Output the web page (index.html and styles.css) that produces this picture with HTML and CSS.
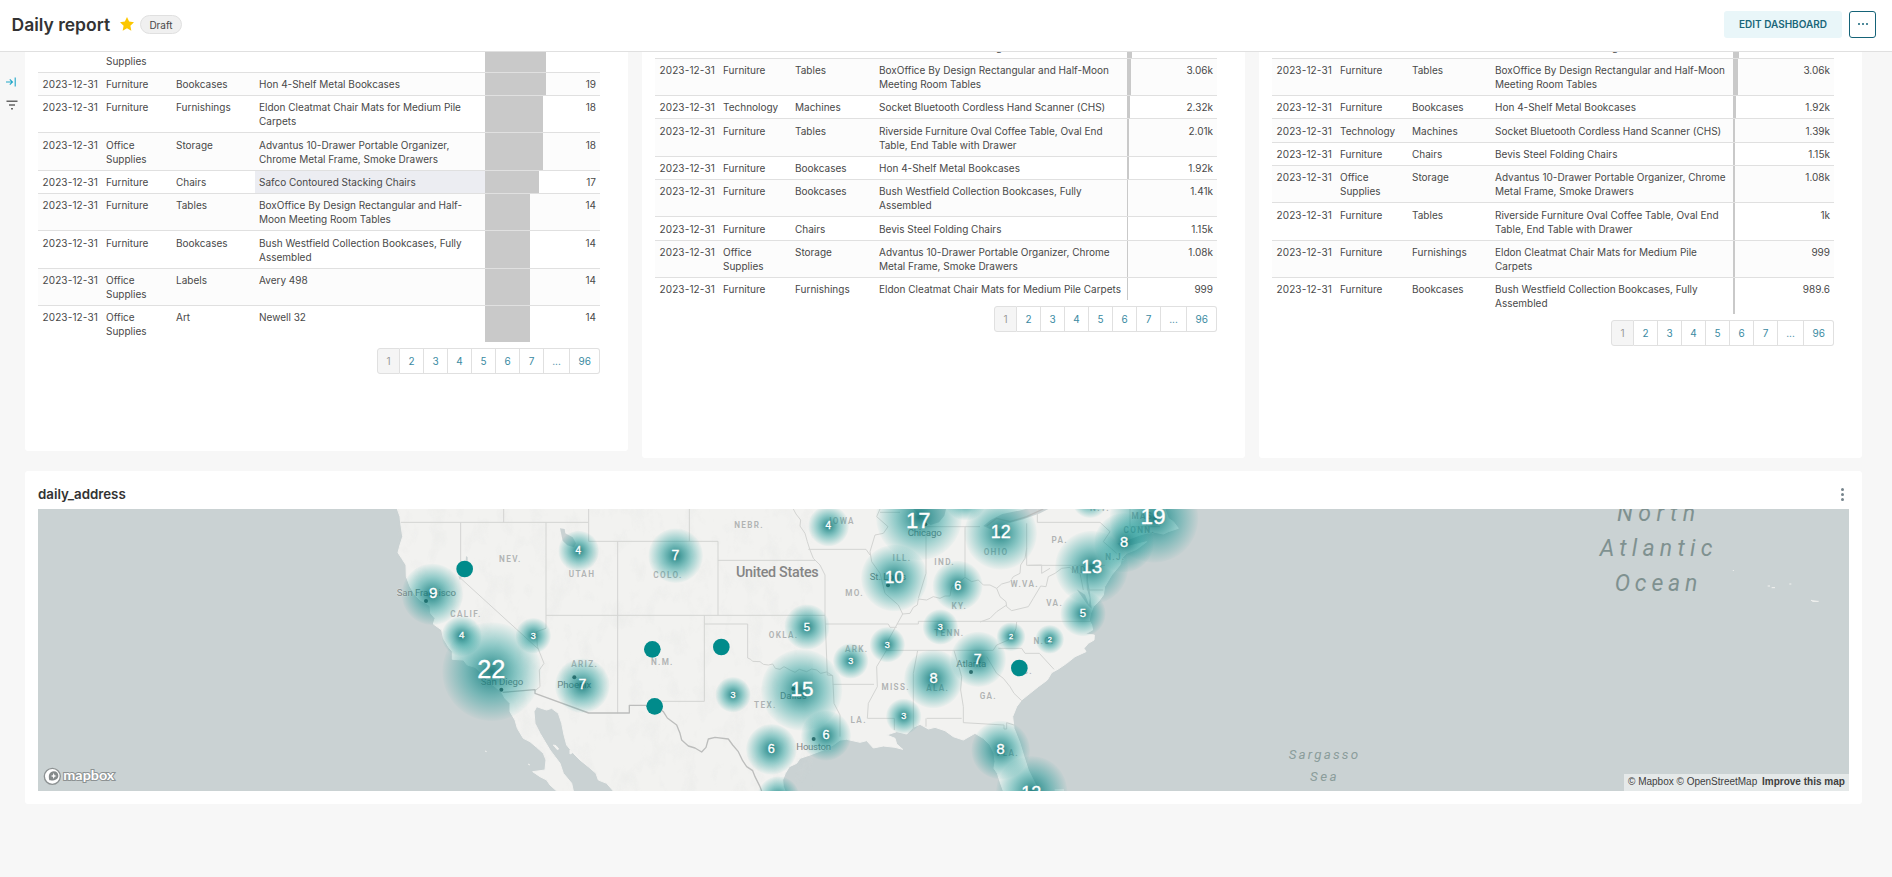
FILE: index.html
```html
<!DOCTYPE html>
<html lang="en">
<head>
<meta charset="utf-8">
<title>Daily report</title>
<link rel="stylesheet" href="styles.css">
</head>
<body>
<header class="header">
  <h1 class="title">Daily report</h1>
  <svg class="star" viewBox="0 0 24 24"><path d="M12 1.500l3.200 6.900 7.300.9-5.400 5.200 1.400 7.500L12 18.400 5.500 22l1.400-7.500L1.500 9.300l7.300-.9z"/></svg>
  <span class="tag">Draft</span>
  <button class="btn edit">EDIT DASHBOARD</button>
  <button class="btn more"><i></i><i></i><i></i></button>
</header>
<div class="body">
  <aside class="rail">
    <svg class="expand" viewBox="0 0 10 10"><path d="M0 5h6.300M3.800 2.300L6.500 5 3.800 7.700M9.200.5v9"/></svg>
    <svg class="filter" viewBox="0 0 12 10"><path d="M.5 1.200h11M3 5h6M5 8.800h2"/></svg>
  </aside>
  <main class="main">
    <div class="charts">
      <section class="card short">
        <div class="table t1">
          <div class="row cut"><span></span><span>Supplies</span><span></span><span></span><span class="val" style="--w:61px"></span></div>
          <div class="row"><span>2023-12-31</span><span>Furniture</span><span>Bookcases</span><span>Hon 4-Shelf Metal Bookcases</span><span class="val" style="--w:61px">19</span></div>
          <div class="row"><span>2023-12-31</span><span>Furniture</span><span>Furnishings</span><span>Eldon Cleatmat Chair Mats for Medium Pile<br>Carpets</span><span class="val" style="--w:58px">18</span></div>
          <div class="row tall"><span>2023-12-31</span><span>Office<br>Supplies</span><span>Storage</span><span>Advantus 10-Drawer Portable Organizer,<br>Chrome Metal Frame, Smoke Drawers</span><span class="val" style="--w:58px">18</span></div>
          <div class="row"><span>2023-12-31</span><span>Furniture</span><span>Chairs</span><span class="hover">Safco Contoured Stacking Chairs</span><span class="val" style="--w:54px">17</span></div>
          <div class="row"><span>2023-12-31</span><span>Furniture</span><span>Tables</span><span>BoxOffice By Design Rectangular and Half-<br>Moon Meeting Room Tables</span><span class="val" style="--w:45px">14</span></div>
          <div class="row tall"><span>2023-12-31</span><span>Furniture</span><span>Bookcases</span><span>Bush Westfield Collection Bookcases, Fully<br>Assembled</span><span class="val" style="--w:45px">14</span></div>
          <div class="row"><span>2023-12-31</span><span>Office<br>Supplies</span><span>Labels</span><span>Avery 498</span><span class="val" style="--w:45px">14</span></div>
          <div class="row"><span>2023-12-31</span><span>Office<br>Supplies</span><span>Art</span><span>Newell 32</span><span class="val" style="--w:45px">14</span></div>
        </div>
        <nav class="pages p1"><b>1</b><a>2</a><a>3</a><a>4</a><a>5</a><a>6</a><a>7</a><a class="gap">...</a><a class="last">96</a></nav>
      </section>
      <section class="card">
        <div class="table t2">
          <div class="row cut"><span></span><span></span><span></span><span class="tail">g</span><span class="val" style="--w:5px"></span></div>
          <div class="row"><span>2023-12-31</span><span>Furniture</span><span>Tables</span><span>BoxOffice By Design Rectangular and Half-Moon<br>Meeting Room Tables</span><span class="val" style="--w:4px">3.06k</span></div>
          <div class="row"><span>2023-12-31</span><span>Technology</span><span>Machines</span><span>Socket Bluetooth Cordless Hand Scanner (CHS)</span><span class="val" style="--w:3px">2.32k</span></div>
          <div class="row tall"><span>2023-12-31</span><span>Furniture</span><span>Tables</span><span>Riverside Furniture Oval Coffee Table, Oval End<br>Table, End Table with Drawer</span><span class="val" style="--w:2px">2.01k</span></div>
          <div class="row"><span>2023-12-31</span><span>Furniture</span><span>Bookcases</span><span>Hon 4-Shelf Metal Bookcases</span><span class="val" style="--w:2px">1.92k</span></div>
          <div class="row"><span>2023-12-31</span><span>Furniture</span><span>Bookcases</span><span>Bush Westfield Collection Bookcases, Fully<br>Assembled</span><span class="val" style="--w:1px">1.41k</span></div>
          <div class="row tall"><span>2023-12-31</span><span>Furniture</span><span>Chairs</span><span>Bevis Steel Folding Chairs</span><span class="val" style="--w:1px">1.15k</span></div>
          <div class="row"><span>2023-12-31</span><span>Office<br>Supplies</span><span>Storage</span><span>Advantus 10-Drawer Portable Organizer, Chrome<br>Metal Frame, Smoke Drawers</span><span class="val" style="--w:1px">1.08k</span></div>
          <div class="row"><span>2023-12-31</span><span>Furniture</span><span>Furnishings</span><span>Eldon Cleatmat Chair Mats for Medium Pile Carpets</span><span class="val" style="--w:1px">999</span></div>
        </div>
        <nav class="pages p2"><b>1</b><a>2</a><a>3</a><a>4</a><a>5</a><a>6</a><a>7</a><a class="gap">...</a><a class="last">96</a></nav>
      </section>
      <section class="card">
        <div class="table t3">
          <div class="row cut"><span></span><span></span><span></span><span class="tail">g</span><span class="val" style="--w:6px"></span></div>
          <div class="row"><span>2023-12-31</span><span>Furniture</span><span>Tables</span><span>BoxOffice By Design Rectangular and Half-Moon<br>Meeting Room Tables</span><span class="val" style="--w:5px">3.06k</span></div>
          <div class="row"><span>2023-12-31</span><span>Furniture</span><span>Bookcases</span><span>Hon 4-Shelf Metal Bookcases</span><span class="val" style="--w:3px">1.92k</span></div>
          <div class="row tall"><span>2023-12-31</span><span>Technology</span><span>Machines</span><span>Socket Bluetooth Cordless Hand Scanner (CHS)</span><span class="val" style="--w:2px">1.39k</span></div>
          <div class="row"><span>2023-12-31</span><span>Furniture</span><span>Chairs</span><span>Bevis Steel Folding Chairs</span><span class="val" style="--w:2px">1.15k</span></div>
          <div class="row"><span>2023-12-31</span><span>Office<br>Supplies</span><span>Storage</span><span>Advantus 10-Drawer Portable Organizer, Chrome<br>Metal Frame, Smoke Drawers</span><span class="val" style="--w:2px">1.08k</span></div>
          <div class="row tall"><span>2023-12-31</span><span>Furniture</span><span>Tables</span><span>Riverside Furniture Oval Coffee Table, Oval End<br>Table, End Table with Drawer</span><span class="val" style="--w:2px">1k</span></div>
          <div class="row"><span>2023-12-31</span><span>Furniture</span><span>Furnishings</span><span>Eldon Cleatmat Chair Mats for Medium Pile<br>Carpets</span><span class="val" style="--w:2px">999</span></div>
          <div class="row"><span>2023-12-31</span><span>Furniture</span><span>Bookcases</span><span>Bush Westfield Collection Bookcases, Fully<br>Assembled</span><span class="val" style="--w:2px">989.6</span></div>
        </div>
        <nav class="pages p1"><b>1</b><a>2</a><a>3</a><a>4</a><a>5</a><a>6</a><a>7</a><a class="gap">...</a><a class="last">96</a></nav>
      </section>
    </div>
    <section class="card mapcard">
      <div class="maphead"><h2>daily_address</h2><span class="kebab"><i></i><i></i><i></i></span></div>
      <div class="map">
        <svg viewBox="-1026 57 5433 846" preserveAspectRatio="none">
          <defs>
            <radialGradient id="g"><stop offset="0" stop-color="#00696b" stop-opacity=".84"/><stop offset=".2" stop-color="#007a7a" stop-opacity=".68"/><stop offset=".55" stop-color="#008f8d" stop-opacity=".4"/><stop offset="1" stop-color="#009490" stop-opacity=".02"/></radialGradient>
            <filter id="relief" x="0" y="0" width="100%" height="100%"><feTurbulence type="fractalNoise" baseFrequency=".02 .012" numOctaves="4" seed="4"/><feColorMatrix values="0 0 0 0 .72  0 0 0 0 .74  0 0 0 0 .73  2.200 0 0 0 -1.100"/></filter>
            <clipPath id="landclip"><path d="M52 57H1300V903H700L680 880 655 870 648 850 625 830 560 765 545 700 515 655 462 650 480 730 540 820 580 903H530L498 810 430 745 375 625 300 545 217 508 160 400 80 260 55 188Z"/></clipPath>
          </defs>
          <g class="land">
            <path d="M52 57L60 80 62 100 68 140 60 165 54 188 65 205 78 225 79 260 90 290 105 315 120 330 138 340 150 348 152 370 165 385 160 402 185 420 190 445 205 470 217 485 217 508 250 510 262 525 285 532 300 545 318 570 345 590 365 607 375 625 390 640 390 665 405 690 412 715 430 745 450 755 470 772 490 790 498 810 495 840 458 845 480 860 500 870 510 885 530 903H580L575 880 550 850 540 820 525 800 510 780 495 755 480 730 465 700 462 665 470 650 490 657 500 660 515 655 535 670 545 700 552 735 560 765 580 790 600 810 625 830 648 850 655 870 680 880 700 903H1215L1210 890 1208 870 1216 850 1228 830 1250 820 1260 805 1290 795 1330 780 1360 765 1380 750 1400 748 1440 757 1460 752 1480 774 1510 768 1545 772 1568 778 1550 762 1545 745 1520 735 1550 725 1580 732 1600 712 1620 703 1645 717 1665 712 1695 722 1720 740 1750 750 1785 730 1810 745 1830 765 1842 790 1845 815 1842 835 1852 850 1860 875 1870 903H1975L1965 880 1945 840 1932 800 1920 760 1902 715 1898 680 1910 650 1925 630 1950 610 1975 590 2002 570 2015 548 2035 537 2060 520 2085 500 2118 485 2112 475 2125 460 2142 450 2143 435 2115 432 2138 420 2135 405 2128 390 2132 370 2140 350 2155 335 2170 315 2174 290 2195 255 2220 225 2225 205 2240 190 2270 178 2300 155 2260 165 2225 175 2210 160 2240 150 2280 135 2315 125 2350 132 2365 125 2395 115 2380 95 2365 85 2355 57Z"/>
            <path d="M520 765l8 2 8 10-4 2zM570 780l8 8-8 4zM315 783l5 2M444 822l6 3M2024 900h28M4060 240v3M4163 288h7M4175 293h10M4228 282h6M4293 330l5 4h18"/>
          </g>
          <g clip-path="url(#landclip)"><rect class="relief" x="50" y="57" width="1250" height="846" filter="url(#relief)"/></g>
          <g class="water">
            <path d="M540 115l14 2 2 13 22 12 10 18-6 12-20-6-14-14zM1600 57h98l-5 20-16 20-25 8-22-14zM1810 108l22-18 35-18 50-10 20-5h68l-25 13-50 18-45 12-55 17zM2090 298l25 16 12 30 2-20-8-28-2-46 10 50 6 56-14-14z"/>
            <path d="M258 198l5 4v12h-6zM235 258l9 4-4 9z"/>
          </g>
          <g class="states">
            <path d="M62 97H626V57M371 57V97M242 97V265L478 480M498 97V415L470 425 472 470 492 520 478 540 480 590 465 602M498 376H1335M626 97V154H1014V376M713 154V670M928 57V154M1014 211H1305M973 376V634H840M973 402H1103V504L1112 508 1118 514 1140 515 1150 523 1165 525 1178 522 1186 535 1200 538 1212 530 1230 540 1245 547 1258 538 1280 545 1295 537 1310 540 1322 550 1340 546 1358 557M1240 57L1248 72 1262 90 1260 108 1275 130 1282 155 1290 180 1300 205 1320 225 1335 255V376L1342 555 1358 557 1362 640 1380 675V740M1285 178H1458L1470 195M1500 57L1490 80 1524 110 1510 130 1485 135 1470 185 1475 215 1500 250 1515 310 1555 345 1568 372 1550 405 1525 450 1520 480 1490 530 1492 590 1465 640 1462 685H1543V720M1500 67H1560M1335 402H1525L1530 412H1550M1358 583H1482M1638 135V250L1615 325M1638 110H1800M1755 110V260M1568 372L1590 370 1600 352 1612 345 1615 327 1640 330 1660 320 1680 325 1695 318 1710 318 1715 290 1735 278 1755 262 1775 275 1795 270 1810 285 1830 285 1850 295M1550 402H1615V394H2135M1520 481H1840M1613 481L1600 550V720M1722 481L1745 560 1742 600 1750 650 1750 698 1872 705V717H1880V698L1902 705M1640 685H1745M1638 710V685M1940 100V226H2175M1972 57V97H2160L2190 125 2170 155 2210 190M1940 175L1935 205 1922 225 1920 250 1900 260 1890 275 1865 282 1850 295 1860 320 1878 335 1880 350 1895 362 1945 350 1960 325 1975 300 1982 288 1998 290 2005 260 2025 250 2045 235 2070 232 2085 250 2100 250 2110 300M1800 396L1830 385 1850 365 1880 345M1840 480L1850 465 1885 450 1900 435 1908 415 1910 396M1855 475H1925L1935 490H1978L2022 538M1820 500L1850 550 1870 565 1890 590 1902 610 1925 632M1945 226L1985 225 1985 250 2010 235M2250 57V110H2340M2122 226V300H2170M2300 57V120"/>
          </g>
          <path class="nation" d="M368 607L465 599V610L626 669H748V646H820L850 665 862 684 890 705 900 730 905 750 925 768 945 774 965 786 978 772 985 747 1005 742 1045 747 1058 765 1075 785 1088 812 1100 830 1118 842 1125 860 1140 890 1145 903M1820 108L1850 85 1890 95 1940 80 1990 57"/>
          <g class="labels st">
            <text x="391" y="216">NEV.</text><text x="606" y="261">UTAH</text><text x="864" y="265">COLO.</text><text x="258" y="381">CALIF.</text><text x="614" y="531">ARIZ.</text><text x="847" y="525">N.M.</text><text x="1107" y="114">NEBR.</text><text x="1211" y="443">OKLA.</text><text x="1156" y="655">TEX.</text><text x="1386" y="101">IOWA</text><text x="1424" y="319">MO.</text><text x="1566" y="212">ILL.</text><text x="1694" y="224">IND.</text><text x="1738" y="356">KY.</text><text x="1708" y="438">TENN.</text><text x="1430" y="486">ARK.</text><text x="1547" y="601">MISS.</text><text x="1673" y="603">ALA.</text><text x="1436" y="699">LA.</text><text x="1825" y="628">GA.</text><text x="1848" y="196">OHIO</text><text x="2039" y="159">PA.</text><text x="1934" y="290">W.VA.</text><text x="2024" y="349">VA.</text><text x="1992" y="461">N.C.</text><text x="1928" y="553">S.C.</text><text x="2206" y="211">N.J.</text><text x="2102" y="250">MD.</text><text x="2278" y="128">CONN.</text><text x="2302" y="88">MASS.</text><text x="1884" y="798">FLA.</text><text x="2160" y="63">N.Y.</text>
          </g>
          <text class="us" x="1192" y="260" textLength="248">United States</text>
          <g class="labels city">
            <text x="139" y="318" textLength="178">San Francisco</text><text x="366" y="584" textLength="128">San Diego</text><text x="583" y="593" textLength="102">Phoenix</text><text x="1634" y="137" textLength="102">Chicago</text><text x="1524" y="271" textLength="110">St. Louis</text><text x="1240" y="628" textLength="80">Dallas</text><text x="1301" y="780" textLength="104">Houston</text><text x="1774" y="530" textLength="90">Atlanta</text>
          </g>
          <g class="pins"><circle cx="138" cy="333" r="6"/><circle cx="364" cy="599" r="6"/><circle cx="583" cy="562" r="6"/><circle cx="1524" cy="286" r="6"/><circle cx="1240" cy="596" r="6"/><circle cx="1301" cy="747" r="6"/><circle cx="1773" cy="546" r="6"/><circle cx="1636" cy="103" r="6"/></g>
          <g class="sea"><text x="3828" y="93" textLength="234">North</text><text x="3828" y="199" textLength="338">Atlantic</text><text x="3828" y="303" textLength="248">Ocean</text></g>
          <g class="sea small"><text x="2830" y="808" textLength="208">Sargasso</text><text x="2830" y="872" textLength="80">Sea</text></g>
          <g class="heat">
            <circle cx="335" cy="545" r="148"/><circle cx="157" cy="313" r="92"/><circle cx="245" cy="438" r="60"/><circle cx="460" cy="437" r="53"/><circle cx="607" cy="587" r="82"/><circle cx="596" cy="183" r="61"/><circle cx="887" cy="197" r="82"/><circle cx="1059" cy="614" r="53"/><circle cx="1174" cy="778" r="76"/><circle cx="1346" cy="108" r="61"/><circle cx="1617" cy="82" r="129"/><circle cx="1543" cy="264" r="100"/><circle cx="1733" cy="287" r="75"/><circle cx="1281" cy="411" r="68"/><circle cx="1681" cy="411" r="53"/><circle cx="1412" cy="513" r="53"/><circle cx="1522" cy="464" r="53"/><circle cx="1265" cy="600" r="122"/><circle cx="1660" cy="567" r="88"/><circle cx="1795" cy="508" r="83"/><circle cx="1571" cy="679" r="53"/><circle cx="1338" cy="737" r="75"/><circle cx="1195" cy="922" r="63"/><circle cx="1757" cy="28" r="63"/><circle cx="1862" cy="130" r="109"/><circle cx="2130" cy="30" r="54"/><circle cx="2322" cy="85" r="133"/><circle cx="2232" cy="158" r="89"/><circle cx="2135" cy="232" r="110"/><circle cx="2109" cy="371" r="68"/><circle cx="1893" cy="440" r="43"/><circle cx="2009" cy="448" r="43"/><circle cx="1862" cy="780" r="88"/><circle cx="1955" cy="905" r="107"/>
          </g>
          <g class="dots"><circle cx="254" cy="237" r="25"/><circle cx="817" cy="478" r="25"/><circle cx="1024" cy="471" r="25"/><circle cx="824" cy="649" r="25"/><circle cx="1918" cy="534" r="25"/></g>
          <g class="counts">
            <text x="334" y="565" font-size="76">22</text><text x="160" y="324" font-size="46">9</text><text x="245" y="445" font-size="29">4</text><text x="460" y="446" font-size="27">3</text><text x="607" y="598" font-size="42">7</text><text x="595" y="192" font-size="30">4</text><text x="886" y="209" font-size="42">7</text><text x="1059" y="623" font-size="27">3</text><text x="1174" y="790" font-size="38">6</text><text x="1345" y="116" font-size="30">4</text><text x="1615" y="113" font-size="66">17</text><text x="1543" y="280" font-size="52">10</text><text x="1733" y="299" font-size="38">6</text><text x="1281" y="423" font-size="34">5</text><text x="1681" y="420" font-size="27">3</text><text x="1412" y="522" font-size="27">3</text><text x="1522" y="473" font-size="27">3</text><text x="1266" y="617" font-size="62">15</text><text x="1661" y="579" font-size="44">8</text><text x="1793" y="521" font-size="42">7</text><text x="1571" y="688" font-size="27">3</text><text x="1338" y="748" font-size="38">6</text><text x="1862" y="145" font-size="54">12</text><text x="2319" y="103" font-size="68">19</text><text x="2232" y="171" font-size="44">8</text><text x="2135" y="250" font-size="56">13</text><text x="2109" y="382" font-size="34">5</text><text x="1893" y="447" font-size="22">2</text><text x="2009" y="455" font-size="22">2</text><text x="1862" y="792" font-size="44">8</text><text x="1954" y="926" font-size="54">12</text>
          </g>
          <g class="logo"><circle cx="-983" cy="859" r="24"/><path d="M-992 871c-5-16 2-27 13-27 9 0 14 6 14 13 0 11-12 16-27 14z"/><path class="spark" d="M-979 849l2.500 6.500 6.500 2.500-6.500 2.500-2.500 6.500-2.500-6.500-6.500-2.500 6.500-2.500z"/><text x="-950" y="870" textLength="153" lengthAdjust="spacingAndGlyphs">mapbox</text></g>
        </svg>
        <div class="attrib">© Mapbox © OpenStreetMap <b>Improve this map</b></div>
      </div>
    </section>
  </main>
</div>
</body>
</html>
```
FILE: styles.css
```css
* { box-sizing: border-box; }
body {
  margin: 0;
  height: 877px;
  overflow: hidden;
  background: #f7f7f7;
  font-family: Inter, "Liberation Sans", sans-serif;
  font-size: 10px;
  color: #484848;
}
.header {
  height: 52px;
  display: flex;
  align-items: center;
  padding: 0 16px 3px 11.5px;
  background: #fff;
  border-bottom: 1px solid #e0e0e0;
}
.title { margin: 0; font-size: 17.5px; font-weight: 600; letter-spacing: 0; color: #333; width: 107.5px; white-space: nowrap; }
.star { width: 16px; height: 16px; fill: #fcc700; }
.tag {
  margin-left: 5px;
  width: 42px;
  height: 19px;
  line-height: 18px;
  text-align: center;
  border: 1px solid #e0e0e0;
  border-radius: 10px;
  background: #f0f0f0;
}
.btn { font: 600 10px Inter, sans-serif; height: 27px; border-radius: 3px; border: 0; padding: 0; }
.edit { margin-left: auto; width: 118px; background: #e9f6f9; color: #1a6679; }
.more { margin-left: 7px; width: 27px; background: #fff; border: 1px solid #156378; display: flex; align-items: center; justify-content: center; gap: 2px; }
.more i { width: 2px; height: 2px; border-radius: 1px; background: #156378; }
.body { display: flex; height: 825px; }
.rail { width: 25px; padding: 25px 0 0 6px; }
.rail svg { display: block; fill: none; }
.expand { width: 10px; height: 10px; stroke: #20a7c9; stroke-width: 1.100; }
.filter { width: 12px; height: 10px; margin-top: 13px; stroke: #666; stroke-width: 1.600; }
.main { width: 1837px; }
.charts { display: grid; grid-template-columns: repeat(3, 603px); gap: 14px; height: 406px; align-items: start; }
.card { background: #fff; border-radius: 0 0 3px 3px; height: 406px; padding-left: 13px; }
.short { height: 399px; }
.row { display: grid; border-bottom: 1px solid #e0e0e0; line-height: 14px; white-space: nowrap; }
.row span { padding: 4px; }
.row span:first-child { letter-spacing: .12px; padding-left: 4.5px; }
.row.tall span { padding-top: 5px; }
.row:nth-child(even) { background: #fcfcfc; }
.row:last-child { border-bottom: 0; }
.row .val { text-align: right; background: linear-gradient(#c9c9c9, #c9c9c9) 0 0 / var(--w) 100% no-repeat; }
.row .hover { background: #ecedf2; }
.t1 { width: 562px; }
.t1 .row { grid-template-columns: 64px 70px 83px 230px 115px; }
.t1 .cut { height: 21px; }
.t1 .cut span { padding-top: 2px; }
.t2 { width: 562px; }
.t2 .row { grid-template-columns: 64px 72px 84px 252px 90px; }
.t3 { width: 562px; }
.t3 .row { grid-template-columns: 64px 72px 83px 242px 101px; }
.t2 .cut, .t3 .cut { height: 7px; overflow: hidden; }
.row .tail { padding: 0 0 0 121px; margin-top: -12px; }
.pages { display: flex; width: 562px; justify-content: flex-end; margin-top: 6px; }
.pages b, .pages a {
  width: 24px;
  height: 25.500px;
  line-height: 24px;
  text-align: center;
  border: 1px solid #e0e0e0;
  border-left: 0;
  padding-left: 1px;
  color: #3a8aa2;
  font-weight: 400;
}
.pages b { width: 23px; border-left: 1px solid #e0e0e0; border-radius: 3px 0 0 3px; background: #f5f5f5; color: #999; }
.pages .gap { width: 26px; }
.pages .last { width: 30.500px; border-radius: 0 3px 3px 0; }
.mapcard { margin-top: 13px; height: 333px; border-radius: 3px; padding: 0 13px; }
.maphead { display: flex; height: 38px; align-items: center; justify-content: space-between; padding: 8px 5px 0 0; }
.maphead h2 { margin: 0; font-size: 13.300px; font-weight: 600; color: #333; }
.kebab { display: flex; flex-direction: column; gap: 2px; }
.kebab i { width: 3px; height: 3px; border-radius: 50%; background: #76848c; }
.map { position: relative; height: 282px; background: #cad2d3; overflow: hidden; }
.map > svg { display: block; width: 1811px; height: 282px; }
.land { fill: #f2f2f0; stroke: #f2f2f0; stroke-width: 3; }
.relief { opacity: .26; }
.water { fill: #cad2d3; }
.states { fill: none; stroke: #d3d4d2; stroke-width: 3; }
.nation { fill: none; stroke: #bcbdbc; stroke-width: 4; stroke-linejoin: round; }
.map text { font-family: Roboto, sans-serif; text-anchor: middle; }
.map .labels text { paint-order: stroke; stroke: #f2f2f0; stroke-opacity: .7; stroke-width: 4px; }
.map .st text { font-size: 24.500px; font-weight: 600; letter-spacing: 4px; fill: #b0b3b3; }
.map .city text { font-size: 29px; fill: #7f8585; stroke-width: 2px; }
.map .us { font-size: 43px; font-weight: 500; fill: #858585; }
.pins { fill: #4f5b5c; }
.map .sea text { font-size: 69px; font-style: italic; fill: #7f9190; font-weight: 400; }
.map .sea.small text { font-size: 40px; fill: #8b9d9b; }
.heat circle { fill: url(#g); }
.dots { fill: #008b8b; }
.map .counts text { font-family: "Liberation Sans", Arial, sans-serif; fill: #fff; stroke: #fff; stroke-width: 1px; }
.logo circle { fill: #fff; stroke: #8d9293; stroke-width: 4; }
.logo path { fill: #858a8b; }
.logo .spark { fill: #fff; }
.map .logo text { font: 700 41px Lato, sans-serif; text-anchor: start; fill: #fff; paint-order: stroke; stroke: #8d9293; stroke-width: 6px; }
.attrib {
  position: absolute;
  right: 0;
  bottom: 0;
  width: 225px;
  height: 17px;
  line-height: 16px;
  padding-left: 4px;
  white-space: nowrap;
  background: rgba(255, 255, 255, .5);
  font-family: "Liberation Sans", Arial, sans-serif;
  font-size: 10px;
  color: #404040;
}
.attrib b { margin-left: 2px; }
```
